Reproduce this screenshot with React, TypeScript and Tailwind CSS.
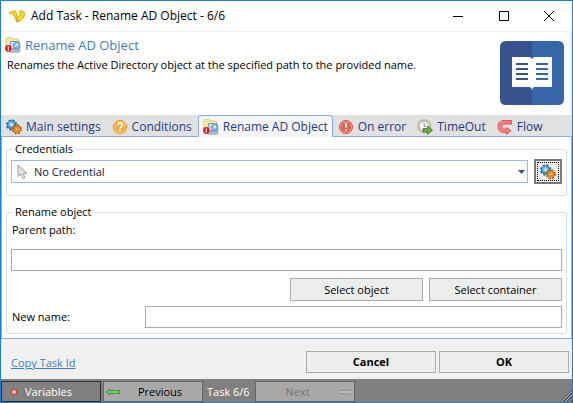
import React from "react";

function Logo() {
  return (
    <svg width="16" height="14" viewBox="0 0 16 14" className="shrink-0" aria-hidden="true">
      <path d="M.5 4.500C1.500 2.500 4 1.300 6 2.300 7.500 3 8.500 5 8 8L7.500 12C6 10 5.500 7 4.500 5.500 3 4 2 5 .5 4.500z" fill="#fbd40a" stroke="#c9a01a" strokeWidth=".8" />
      <path d="M7.300 12.500C8.500 11 8.500 8.500 9.500 7.500 11.500 7 11.500 5 10.300 2.500 12.500 1 15 2 15.500 4.500 15.500 9 12 13 7.300 12.500z" fill="#fddc12" stroke="#b98f20" strokeWidth=".8" />
    </svg>
  );
}

function RenameIcon() {
  return (
    <svg width="16" height="16" viewBox="0 0 16 16" className="shrink-0" aria-hidden="true">
      <path d="M.8 1.800 1.800.6h4.400l1 1.400h6.300V12H.8z" fill="#f5eaa2" stroke="#d2c27a" strokeWidth=".8" />
      <path d="M5.500 4.500H11L14 5v7H6z" fill="#dce9f7" stroke="#6a8fbb" strokeWidth=".9" />
      <path d="M8 7.500 10 5.500 14.500 6 15 11 12.500 12.500 9 11.500z" fill="#7db3e4" stroke="#4d7fb5" strokeWidth=".7" />
      <path d="M9.500 10 12.500 7M10.500 7H12.700V9.300" stroke="#f1f8ff" fill="none" />
      <path d="M5.500 14.800 7.500 12.500H14l1.500 1-1.500 1.700H6z" fill="#b9c8da" stroke="#6d829c" strokeWidth=".6" />
      <ellipse cx="3.300" cy="11.500" rx="3.100" ry="3.400" fill="#ee0f14" />
      <path d="M3.300 9.300v4.400" stroke="#fff" strokeWidth="1.200" />
    </svg>
  );
}

function GearsIcon() {
  return (
    <svg width="16" height="16" viewBox="0 0 16 16" className="shrink-0" aria-hidden="true">
      <circle cx="5.700" cy="6" r="4.600" fill="none" stroke="#2a6ea5" strokeWidth="2.200" strokeDasharray="2.200 1.413" />
      <circle cx="5.700" cy="6" r="4.300" fill="#3d97d3" stroke="#2a6ea5" strokeWidth=".6" />
      <circle cx="5.200" cy="5.200" r="2.700" fill="#79c3ec" />
      <circle cx="5.700" cy="5.800" r="1.300" fill="#e8f4fb" />
      <circle cx="10.800" cy="10.300" r="4" fill="none" stroke="#b4560e" strokeWidth="2" strokeDasharray="1.900 1.242" />
      <circle cx="10.800" cy="10.300" r="3.500" fill="#f9981f" stroke="#b4560e" strokeWidth=".6" />
      <circle cx="10.800" cy="10.300" r="1.300" fill="#fff0d2" stroke="#b65a10" strokeWidth=".6" />
    </svg>
  );
}

function QuestionIcon() {
  return (
    <svg width="16" height="16" viewBox="0 0 16 16" className="shrink-0" aria-hidden="true">
      <circle cx="8" cy="8" r="6.500" fill="#fdaa3c" stroke="#e58a1c" />
      <circle cx="8" cy="8" r="5.500" fill="none" stroke="#ffd08a" strokeWidth=".8" />
      <path d="M5.700 6.400C5.700 3.400 10.500 3.500 10.300 6.200 10.200 7.800 8 7.800 8 9.500M8 10.800v1.700" fill="none" stroke="#fff" strokeWidth="1.600" />
    </svg>
  );
}

function ErrorIcon() {
  return (
    <svg width="16" height="16" viewBox="0 0 16 16" className="shrink-0" aria-hidden="true">
      <circle cx="8" cy="8" r="6.500" fill="#ec5f50" stroke="#cf5548" />
      <circle cx="8" cy="8" r="5.500" fill="none" stroke="#f7a196" strokeWidth=".8" />
      <path d="M8 3.800v4.700M8 10.200v1.800" stroke="#fff" strokeWidth="1.900" />
    </svg>
  );
}

function TimeIcon() {
  return (
    <svg width="16" height="16" viewBox="0 0 16 16" className="shrink-0" aria-hidden="true">
      <circle cx="7.200" cy="7.200" r="6.200" fill="#f6fafd" stroke="#c2b27e" strokeWidth="1.400" />
      <circle cx="7.200" cy="7.200" r="4.700" fill="none" stroke="#a9bfd4" />
      <path d="M7.200 4V7.500h2" fill="none" stroke="#8496a8" />
      <path d="M6 9.500H10.500V7L15.500 11.200 10.500 15.500V13H6z" fill="#68ad45" stroke="#397525" strokeWidth=".8" />
    </svg>
  );
}

function FlowIcon() {
  return (
    <svg width="16" height="16" viewBox="0 0 16 16" className="shrink-0" aria-hidden="true">
      <path
        d="M14.500 1.500H7C3 1.500 1 4 1 7.500 1 11 3 13.500 7 13.500H9.500V15.500L14 11.800 9.500 8.500V10H7.200C4.200 10 4.200 5 7.200 5H14.500z"
        fill="#fb8080"
        stroke="#dc4a4a"
        strokeWidth=".9"
      />
    </svg>
  );
}

function CursorIcon() {
  return (
    <svg width="12" height="16" viewBox="0 0 12 16" aria-hidden="true">
      <path d="M1 1V12.500L4 10 6 14.500 8 13.500 6.200 9.300H10z" fill="#e4e4e4" stroke="#979797" strokeWidth=".9" />
    </svg>
  );
}

function BookIcon() {
  return (
    <svg width="64" height="64" viewBox="0 0 64 64" className="shrink-0" aria-hidden="true">
      <path d="M6 0H32V64H6Q0 64 0 58V6Q0 0 6 0z" fill="#38528f" />
      <path d="M32 0H58Q64 0 64 6V58Q64 64 58 64H32z" fill="#3867a9" />
      <path d="M12 16H30L32 18 34 16H52V46H35Q32 46 32 50 32 46 29 46H12z" fill="#fff" />
      <path d="M16 23H28M16 28H28M16 33H28M16 38H28" stroke="#38528f" strokeWidth="2" />
      <path d="M36 23H48M36 28H48M36 33H48M36 38H48" stroke="#3867a9" strokeWidth="2" />
    </svg>
  );
}

function BackArrow() {
  return (
    <svg width="14" height="8" viewBox="0 0 14 8" className="shrink-0" aria-hidden="true">
      <path d="M.5 4 4 1V2.500H13.500V5.500H4V7z" fill="#6fd06c" stroke="#2f8034" strokeWidth=".8" />
    </svg>
  );
}

function ForwardArrow() {
  return (
    <svg width="14" height="8" viewBox="0 0 14 8" className="shrink-0" aria-hidden="true">
      <path d="M13.500 4 10 1V2.500H.5V5.500H10V7z" fill="#bcbcbc" stroke="#929292" strokeWidth=".8" />
    </svg>
  );
}

const TABS = [
  { name: "Main settings", icon: <GearsIcon />, active: false },
  { name: "Conditions", icon: <QuestionIcon />, active: false },
  { name: "Rename AD Object", icon: <RenameIcon />, active: true },
  { name: "On error", icon: <ErrorIcon />, active: false },
  { name: "TimeOut", icon: <TimeIcon />, active: false },
  { name: "Flow", icon: <FlowIcon />, active: false },
];

const GROUP = "min-w-0 rounded-[3px] border border-[#d5dfe5] px-1 pt-0.5";
const LEGEND = "ml-px px-[3px]";
const INPUT = "h-[22px] min-w-0 border border-[#ababab] bg-white px-1 outline-none";
const BUTTON = "border border-[#ababab] bg-[#ededed]";

export default function App() {
  return (
    <div className="border border-[#1b7fd4] bg-[#f0f0f0] font-['Open_Sans','Noto_Sans',sans-serif] text-[11px] leading-4 text-black">
      <header className="flex h-[31px] items-center border-b border-[#f0f0f0] bg-white pl-2">
        <Logo />
        <h1 className="ml-1.5 flex-1 text-xs">Add Task - Rename AD Object - 6/6</h1>
        <button aria-label="Minimize" className="grid h-full w-[46px] place-items-center">
          <svg width="10" height="10"><path d="M0 5.500H10" stroke="#000" /></svg>
        </button>
        <button aria-label="Maximize" className="grid h-full w-[45px] place-items-center">
          <svg width="10" height="10"><path d="M.5.5H9.500V9.500H.5z" fill="none" stroke="#000" /></svg>
        </button>
        <button aria-label="Close" className="grid h-full w-[46px] place-items-center">
          <svg width="10" height="10"><path d="M0 0 10 10M10 0 0 10" stroke="#000" /></svg>
        </button>
      </header>

      <section className="mr-[3px] flex h-[83px] justify-between bg-white pr-[5px] pl-1">
        <div className="pt-[3px]">
          <h2 className="flex items-center gap-1 text-[13px] leading-5 text-[#3f7fb8]">
            <RenameIcon />
            Rename AD Object
          </h2>
          <p className="ml-0.5 leading-5">
            Renames the Active Directory object at the specified path to the provided name.
          </p>
        </div>
        <div className="pt-[9px]">
          <BookIcon />
        </div>
      </section>

      <nav role="tablist" className="flex h-[22px] items-stretch bg-[#e1e1e1] text-xs text-[#1e3c8c]">
        {TABS.map((tab) => (
          <button
            key={tab.name}
            role="tab"
            aria-selected={tab.active}
            className={
              tab.active
                ? "flex items-center gap-1 rounded-t-[3px] border border-[#8aaee0] border-b-[#f5f5f5] bg-[#f5f5f5] px-1 pt-0.5 whitespace-nowrap"
                : "flex items-center gap-1 border-b border-[#8aaee0] pt-0.5 pr-1.5 pl-[5px] whitespace-nowrap"
            }
          >
            {tab.icon}
            {tab.name}
          </button>
        ))}
        <span className="flex-1 border-b border-[#8aaee0]" />
      </nav>

      <main className="border-x border-b border-[#8aaee0] bg-white px-1 pt-1 pb-1">
        <fieldset className={`${GROUP} pb-[11px]`}>
          <legend className={LEGEND}>Credentials</legend>
          <div className="flex items-center gap-1.5">
            <div className="relative h-[23px] flex-1">
              <select
                aria-label="Credentials"
                className="h-[23px] w-full appearance-none border border-[#a3b8d4] bg-white pl-[22px] text-[#10203c] outline-none"
              >
                <option>No Credential</option>
              </select>
              <span className="pointer-events-none absolute top-1 left-1.5">
                <CursorIcon />
              </span>
              <svg width="7" height="4" viewBox="0 0 7 4" className="pointer-events-none absolute top-2.5 right-[3px]" aria-hidden="true">
                <path d="M0 0H7L3.500 4z" fill="#3f5575" />
              </svg>
            </div>
            <button aria-label="Edit credentials" className="h-[25px] w-7 border-2 border-[#7a7a7a] bg-[#ededed] p-px">
              <span className="flex h-full w-full items-center justify-center border border-dotted border-black">
                <GearsIcon />
              </span>
            </button>
          </div>
        </fieldset>

        <fieldset className={`${GROUP} mt-2 pb-[5px]`}>
          <legend className={LEGEND}>Rename object</legend>
          <label htmlFor="parent-path" className="mb-[11px] block pl-px">Parent path:</label>
          <input id="parent-path" className={`${INPUT} block w-full`} />
          <div className="mt-[7px] flex justify-end gap-1.5">
            <button className={`${BUTTON} h-[23px] w-[133px]`}>Select object</button>
            <button className={`${BUTTON} h-[23px] w-[133px]`}>Select container</button>
          </div>
          <div className="mt-[5px] flex items-center">
            <label htmlFor="new-name" className="w-[134px] pl-px">New name:</label>
            <input id="new-name" className={`${INPUT} flex-1`} />
          </div>
        </fieldset>
      </main>

      <div className="flex h-10 items-center gap-[3px] pt-1.5 pr-[3px] pl-2.5">
        <div className="flex-1 pt-0.5">
          <a href="#copy" className="text-[#3f7fb8] underline">Copy Task Id</a>
        </div>
        <button className={`${BUTTON} h-[22px] w-[130px] font-bold`}>Cancel</button>
        <button className={`${BUTTON} h-[22px] w-[130px] font-bold`}>OK</button>
      </div>

      <footer className="flex h-[23px] items-end bg-[#808080] text-white">
        <button className="flex h-[21px] w-[100px] items-center border border-[#2e2e2e] pl-[9px]">
          <svg width="6" height="6" viewBox="0 0 6 6" aria-hidden="true">
            <rect x=".5" y=".5" width="5" height="5" rx="1.500" fill="#ffb0b0" stroke="#d92a2a" />
          </svg>
          <span className="pl-2">Variables</span>
        </button>
        <button className="ml-0.5 flex h-[21px] w-[100px] items-center border border-[#666] bg-[#a8a8a8] pr-3 pl-0.5 text-black">
          <BackArrow />
          <span className="flex-1 pl-2.5">Previous</span>
        </button>
        <span className="w-[52px] pl-1 leading-[21px]">Task 6/6</span>
        <button
          disabled
          className="flex h-[21px] w-[100px] items-center border border-[#666] bg-[#a8a8a8] pr-px text-[#757575]"
        >
          <span className="flex-1">Next</span>
          <ForwardArrow />
        </button>
        <svg width="12" height="12" viewBox="0 0 12 12" className="ml-auto" aria-hidden="true">
          <path d="M12 0V12H0z" fill="#4a4a4a" />
          <path d="M1.500 12 12 1.500M5 12 12 5M8.500 12 12 8.500" stroke="#e0e0e0" />
        </svg>
      </footer>
    </div>
  );
}
